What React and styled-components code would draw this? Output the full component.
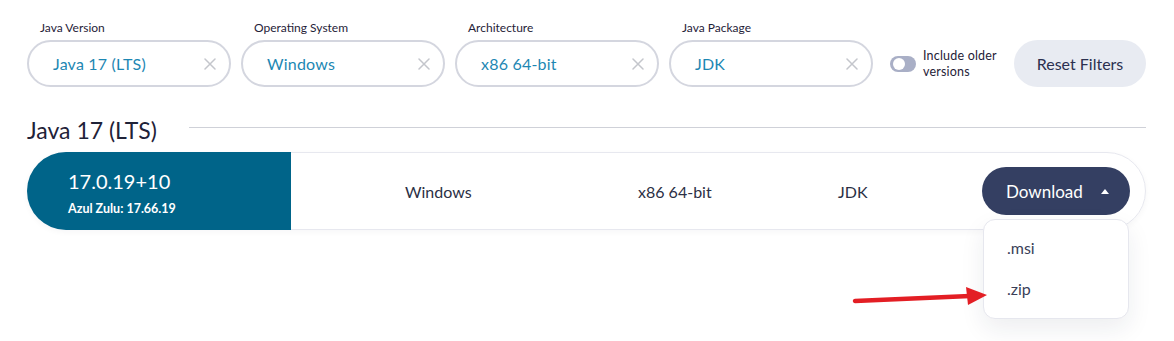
import React from 'react'
import styled, { createGlobalStyle } from 'styled-components'

const filters = [
  { label: 'Java Version', value: 'Java 17 (LTS)' },
  { label: 'Operating System', value: 'Windows' },
  { label: 'Architecture', value: 'x86 64-bit' },
  { label: 'Java Package', value: 'JDK' },
]

const GlobalStyle = createGlobalStyle`
  body {
    margin: 0;
    background: #fff;
    font-family: Lato, "Noto Sans", sans-serif;
  }
`

const ClearIcon = () => (
  <svg width="12" height="12" viewBox="0 0 12 12">
    <path d="M1 1 L11 11 M11 1 L1 11" stroke="#c4c6cc" strokeWidth="1.5" strokeLinecap="round" />
  </svg>
)

const App = () => {
  return (
    <Page>
      <GlobalStyle />
      <FilterRow>
        {filters.map((f) => (
          <Field key={f.label}>
            <FieldLabel>{f.label}</FieldLabel>
            <Pill>
              <span>{f.value}</span>
              <ClearIcon />
            </Pill>
          </Field>
        ))}
        <ToggleGroup>
          <Toggle />
          <ToggleText>Include older<br />versions</ToggleText>
        </ToggleGroup>
        <ResetButton>Reset Filters</ResetButton>
      </FilterRow>

      <SectionHead>
        <h2>Java 17 (LTS)</h2>
        <Rule />
      </SectionHead>

      <Card>
        <VersionBox>
          <strong>17.0.19+10</strong>
          <small>Azul Zulu: 17.66.19</small>
        </VersionBox>
        <InfoCell $w="233px" $pad="114px">Windows</InfoCell>
        <InfoCell $w="200px">x86 64-bit</InfoCell>
        <InfoCell $w="auto">JDK</InfoCell>
        <DownloadWrap>
          <DownloadButton>
            Download
            <Caret />
          </DownloadButton>
          <Menu>
            <MenuItem>.msi</MenuItem>
            <MenuItem>.zip</MenuItem>
            <Pointer width="140" height="24" viewBox="0 0 140 24">
              <path d="M5 17 L120 12" stroke="#e31e24" strokeWidth="4.5" strokeLinecap="round" />
              <path d="M116 3 L137 11 L118 21 Z" fill="#e31e24" />
            </Pointer>
          </Menu>
        </DownloadWrap>
      </Card>
    </Page>
  )
}

export default App

const Page = styled.div`
  width: 1174px;
  height: 341px;
  box-sizing: border-box;
  padding: 20px 28px 0 27px;
  overflow: hidden;
`

const FilterRow = styled.div`
  display: flex;
  align-items: flex-end;
  gap: 10px;
`

const Field = styled.div`
  width: 204px;
  display: flex;
  flex-direction: column;
`

const FieldLabel = styled.label`
  font-size: 12px;
  line-height: 16px;
  color: #1f2238;
  padding-left: 13px;
  margin-bottom: 4px;
`

const Pill = styled.div`
  height: 47px;
  box-sizing: border-box;
  border: 2px solid #d4d6df;
  border-radius: 24px;
  display: flex;
  align-items: center;
  justify-content: space-between;
  padding: 0 13px 0 24px;
  font-size: 16px;
  letter-spacing: 0.2px;
  color: #1d87b3;
`

const ToggleGroup = styled.div`
  height: 47px;
  display: flex;
  align-items: center;
  margin-left: 7px;
  gap: 7px;
`

const Toggle = styled.span`
  width: 26px;
  height: 16px;
  border-radius: 8px;
  background: #a9afc6;
  position: relative;
  flex-shrink: 0;
  &::after {
    content: '';
    position: absolute;
    left: 3px;
    top: 2px;
    width: 12px;
    height: 12px;
    border-radius: 50%;
    background: #fff;
  }
`

const ToggleText = styled.span`
  font-size: 12.5px;
  line-height: 16px;
  letter-spacing: 0.2px;
  color: #1f2238;
`

const ResetButton = styled.button`
  margin-left: auto;
  width: 132px;
  height: 47px;
  border: none;
  border-radius: 24px;
  background: #e8ebf2;
  font-family: inherit;
  font-size: 16px;
  color: #2b3050;
`

const SectionHead = styled.div`
  display: flex;
  align-items: center;
  margin-top: 30px;
  h2 {
    margin: 0;
    font-weight: 400;
    font-size: 23px;
    line-height: 26px;
    color: #1f2238;
  }
`

const Rule = styled.div`
  flex: 1;
  height: 1px;
  background: #cfd1d8;
  margin-left: 32px;
  margin-top: -6px;
`

const Card = styled.div`
  margin-top: 9px;
  height: 78px;
  box-sizing: border-box;
  border: 1px solid #e7e8ef;
  border-radius: 39px;
  display: flex;
  align-items: center;
  box-shadow: 0 2px 6px rgba(30, 34, 60, 0.04);
`

const VersionBox = styled.div`
  align-self: stretch;
  margin: -1px 0 -1px -1px;
  width: 264px;
  box-sizing: border-box;
  background: #006489;
  border-radius: 39px 0 0 39px;
  padding-left: 41px;
  padding-top: 2px;
  display: flex;
  flex-direction: column;
  justify-content: center;
  color: #fff;
  strong {
    font-weight: 400;
    font-size: 20px;
    line-height: 26px;
  }
  small {
    margin-top: 8px;
    font-weight: 700;
    font-size: 12.5px;
    line-height: 14px;
  }
`

const InfoCell = styled.div`
  width: ${(p) => p.$w};
  flex: ${(p) => (p.$w === 'auto' ? 1 : 'none')};
  padding-left: ${(p) => p.$pad || 0};
  font-size: 16px;
  color: #2b2f45;
`

const DownloadWrap = styled.div`
  position: relative;
  margin-right: 15px;
`

const DownloadButton = styled.button`
  width: 148px;
  height: 48px;
  border: none;
  border-radius: 24px;
  background: #343f62;
  color: #fff;
  font-family: inherit;
  font-size: 17px;
  display: flex;
  align-items: center;
  padding-left: 24px;
  gap: 18px;
`

const Caret = styled.span`
  width: 0;
  height: 0;
  border-left: 4.5px solid transparent;
  border-right: 4.5px solid transparent;
  border-bottom: 5px solid #fff;
`

const Menu = styled.div`
  position: absolute;
  top: calc(100% + 4px);
  left: 1px;
  width: 146px;
  box-sizing: border-box;
  padding: 7px 0 9px;
  background: #fff;
  border: 1px solid #e6e7ee;
  border-radius: 12px;
  box-shadow: 0 10px 24px rgba(30, 34, 60, 0.08);
`

const MenuItem = styled.div`
  height: 41px;
  display: flex;
  align-items: center;
  padding-left: 23px;
  font-size: 16px;
  color: #3a3f58;
`

const Pointer = styled.svg`
  position: absolute;
  right: calc(100% - 6px);
  top: 64px;
`
